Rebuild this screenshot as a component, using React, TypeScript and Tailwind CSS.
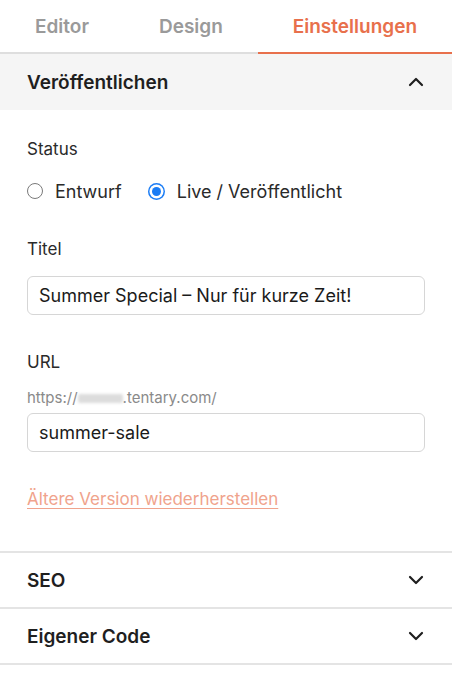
import React from "react";

const Chevron = ({ up }: { up?: boolean }) => (
  <svg width="18" height="18" viewBox="0 0 18 18" fill="none" className="text-[#1f1f1f]">
    <path
      d={up ? "M3 12 L9 6 L15 12" : "M3 6 L9 12 L15 6"}
      stroke="currentColor"
      strokeWidth="2.2"
      strokeLinecap="round"
      strokeLinejoin="round"
    />
  </svg>
);

export default function App() {
  return (
    <div className="w-[452px] h-[680px] bg-white overflow-hidden font-['Inter',sans-serif] text-[#222]">
      {/* Tabs */}
      <div className="flex h-[54px] border-b-2 border-[#dedede]">
        <div className="flex-auto flex items-center justify-center px-[20px] pt-[2px] text-[19px] font-semibold text-[#9a9a9a]">
          Editor
        </div>
        <div className="flex-auto flex items-center justify-center px-[20px] pt-[2px] text-[19px] font-semibold text-[#9a9a9a]">
          Design
        </div>
        <div className="flex-auto relative flex items-center justify-center px-[20px] pt-[2px] text-[19px] font-semibold text-[#e8704c]">
          Einstellungen
          <div className="absolute left-0 right-0 bottom-[-2px] h-[2px] bg-[#e8704c]" />
        </div>
      </div>

      {/* Veröffentlichen header */}
      <div className="flex items-center justify-between h-[56px] bg-[#f5f5f5] pl-[27px] pr-[27px]">
        <span className="text-[19px] font-semibold text-[#1f1f1f] pt-[3px]">Veröffentlichen</span>
        <Chevron up />
      </div>

      {/* Content */}
      <div className="px-[27px] pt-[29px] pb-[40px]">
        <div className="text-[17px] leading-[20px] text-[#2a2a2a]">Status</div>
        <div className="flex items-center mt-[21px] h-[22px] text-[18px] text-[#2a2a2a]">
          <label className="flex items-center">
            <span className="w-[16px] h-[16px] rounded-full border border-[#7a7a7a] bg-white" />
            <span className="ml-[12px]">Entwurf</span>
          </label>
          <label className="flex items-center ml-[26px]">
            <span className="w-[17px] h-[17px] rounded-full bg-[#1a7cf5] flex items-center justify-center">
              <span className="w-[9px] h-[9px] rounded-full bg-[#1a7cf5] ring-[2.5px] ring-white" />
            </span>
            <span className="ml-[12px]">Live / Veröffentlicht</span>
          </label>
        </div>

        <div className="mt-[37px] text-[17px] leading-[20px] text-[#2a2a2a]">Titel</div>
        <div className="mt-[17px] h-[39px] rounded-[6px] border border-[#d6d6d6] flex items-center px-[11px] text-[18px] text-[#1a1a1a]">
          Summer Special – Nur für kurze Zeit!
        </div>

        <div className="mt-[37px] text-[17px] leading-[20px] text-[#2a2a2a]">URL</div>
        <div className="mt-[17px] flex items-center text-[15px] leading-[18px] text-[#8a8a8a]">
          <span>https://</span>
          <span className="inline-block w-[45px] h-[9px] bg-[#dcdcdc] rounded-[2px] blur-[1.5px]" />
          <span>.tentary.com/</span>
        </div>
        <div className="mt-[6px] h-[39px] rounded-[6px] border border-[#d6d6d6] flex items-center px-[11px] text-[18px] text-[#1a1a1a]">
          summer-sale
        </div>

        <div className="mt-[35px]">
          <a className="text-[17px] leading-[20px] text-[#f0a38c] underline underline-offset-[3px] decoration-[1px]">
            Ältere Version wiederherstellen
          </a>
        </div>
      </div>

      {/* Collapsed sections */}
      <div className="border-t-2 border-[#e4e4e4]">
        <div className="flex items-center justify-between h-[56px] px-[27px] border-b-2 border-[#e4e4e4]">
          <span className="text-[19px] font-semibold text-[#1f1f1f] pt-[3px]">SEO</span>
          <Chevron />
        </div>
        <div className="flex items-center justify-between h-[56px] px-[27px] border-b-2 border-[#e4e4e4]">
          <span className="text-[19px] font-semibold text-[#1f1f1f] pt-[3px]">Eigener Code</span>
          <Chevron />
        </div>
      </div>
    </div>
  );
}
